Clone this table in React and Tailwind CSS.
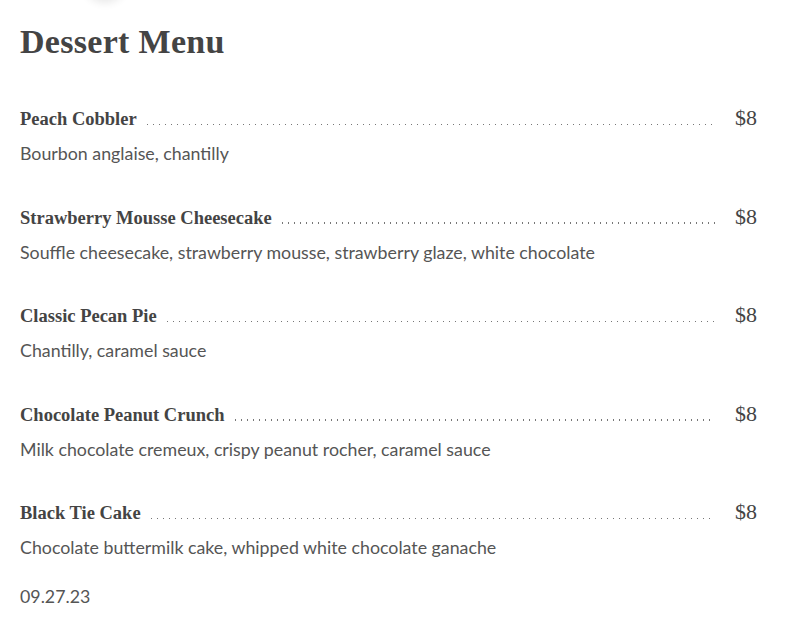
const items = [
  { name: "Peach Cobbler", desc: "Bourbon anglaise, chantilly", price: "$8" },
  {
    name: "Strawberry Mousse Cheesecake",
    desc: "Souffle cheesecake, strawberry mousse, strawberry glaze, white chocolate",
    price: "$8",
  },
  { name: "Classic Pecan Pie", desc: "Chantilly, caramel sauce", price: "$8" },
  {
    name: "Chocolate Peanut Crunch",
    desc: "Milk chocolate cremeux, crispy peanut rocher, caramel sauce",
    price: "$8",
  },
  {
    name: "Black Tie Cake",
    desc: "Chocolate buttermilk cake, whipped white chocolate ganache",
    price: "$8",
  },
];

export default function App() {
  return (
    <div className="min-h-screen overflow-hidden bg-white pl-[20px] pr-[28px]">
      {/* logo peeking from above */}
      <div className="ml-[63px] -mt-[44px] h-[44px] w-[44px] rounded-full bg-white shadow-[0_3px_8px_rgba(0,0,0,0.09)]" />

      <h1 className="mt-[22px] font-['Liberation_Serif',serif] text-[34px] font-bold leading-[40px] tracking-[0.3px] text-[#444]">
        Dessert Menu
      </h1>

      <div className="mt-[44px] flex flex-col gap-[39.5px]">
        {items.map((it) => (
          <div key={it.name}>
            <div className="flex h-[24px] items-baseline">
              <span className="font-['Liberation_Serif',serif] text-[18.5px] font-bold leading-[24px] text-[#444]">
                {it.name}
              </span>
              <div className="ml-[10px] mr-[20px] h-[1.5px] flex-1 bg-[linear-gradient(to_right,#777_1.5px,transparent_1.5px)] bg-[length:6px_1.5px] bg-repeat-x" />
              <span className="font-['Liberation_Serif',serif] text-[22px] leading-[24px] text-[#444]">
                {it.price}
              </span>
            </div>
            <p className="mt-[11px] font-['Lato',sans-serif] text-[17.8px] leading-[24px] text-[#555]">
              {it.desc}
            </p>
          </div>
        ))}
      </div>

      <p className="mt-[25px] font-['Lato',sans-serif] text-[17.8px] leading-[24px] text-[#555]">
        09.27.23
      </p>
    </div>
  );
}
